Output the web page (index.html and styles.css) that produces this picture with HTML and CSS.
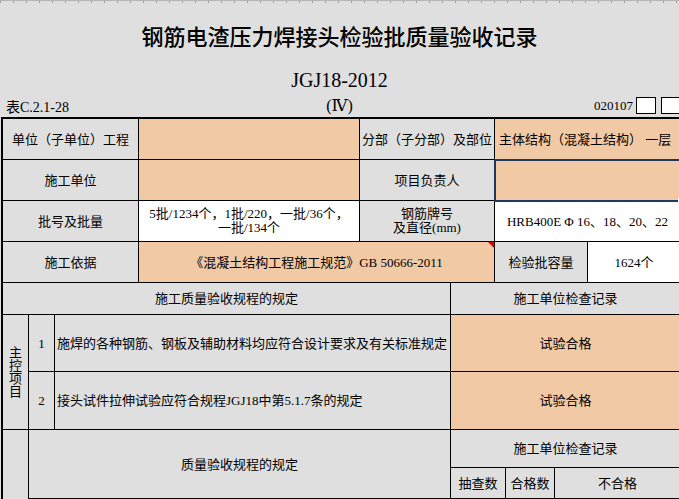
FILE: index.html
```html
<!DOCTYPE html>
<html lang="zh-CN">
<head>
<meta charset="utf-8">
<title>钢筋电渣压力焊接头检验批质量验收记录</title>
<link rel="stylesheet" href="styles.css">
</head>
<body>
<div class="sheet">
  <div class="ruler"></div>
  <header class="head">
    <h1 class="title">钢筋电渣压力焊接头检验批质量验收记录</h1>
    <div class="std">JGJ18-2012</div>
    <div class="meta">
      <span class="form-no">表C.2.1-28</span>
      <span class="roman">(Ⅳ)</span>
      <span class="code">020107<span class="box"></span><span class="box"></span></span>
    </div>
  </header>

  <div class="grid">
    <div class="cell s3">单位（子单位）工程</div>
    <div class="cell fill"></div>
    <div class="cell s2">分部（子分部）及部位</div>
    <div class="cell s4 fill left">主体结构（混凝土结构） 一层</div>

    <div class="cell s3">施工单位</div>
    <div class="cell fill"></div>
    <div class="cell s2">项目负责人</div>
    <div class="cell s4 fill selected"></div>

    <div class="cell s3">批号及批量</div>
    <div class="cell white lines">5批/1234个，1批/220，一批/36个，<br>一批/134个</div>
    <div class="cell s2 lines">钢筋牌号<br>及直径(mm)</div>
    <div class="cell s4 white">HRB400E Φ 16、18、20、22</div>

    <div class="cell s3">施工依据</div>
    <div class="cell s3 fill note">《混凝土结构工程施工规范》GB 50666-2011</div>
    <div class="cell s3">检验批容量</div>
    <div class="cell white">1624个</div>

    <div class="cell s5">施工质量验收规程的规定</div>
    <div class="cell s5">施工单位检查记录</div>

    <div class="cell r2 vert">主控项目</div>
    <div class="cell">1</div>
    <div class="cell s3 left item">施焊的各种钢筋、钢板及辅助材料均应符合设计要求及有关标准规定</div>
    <div class="cell s5 fill">试验合格</div>

    <div class="cell">2</div>
    <div class="cell s3 left item">接头试件拉伸试验应符合规程JGJ18中第5.1.7条的规定</div>
    <div class="cell s5 fill">试验合格</div>

    <div class="cell r3"></div>
    <div class="cell s4 r2">质量验收规程的规定</div>
    <div class="cell s5">施工单位检查记录</div>

    <div class="cell s2">抽查数</div>
    <div class="cell">合格数</div>
    <div class="cell s2">不合格</div>

    <div class="cell"></div>
    <div class="cell s3"></div>
    <div class="cell s2"></div>
    <div class="cell"></div>
    <div class="cell s2"></div>
  </div>
</div>
</body>
</html>
```

FILE: styles.css
```css
html, body {
  margin: 0;
  padding: 0;
}

body {
  width: 679px;
  height: 499px;
  overflow: hidden;
  background: #dfdfdf;
  color: #000;
  font-family: "Liberation Serif", "Noto Sans CJK SC", serif;
}

.sheet {
  width: 679px;
}

.ruler {
  height: 4px;
  border-top: 1px solid #b4b4b4;
  box-sizing: border-box;
  background: repeating-linear-gradient(to right, #9a9a9a 0, #9a9a9a 1px, transparent 1px, transparent 13px);
  background-size: 100% 2px;
  background-repeat: no-repeat;
}

.head {
  height: 113px;
}

.title {
  margin: 0;
  height: 62px;
  line-height: 62px;
  text-align: center;
  font-family: "Noto Sans CJK SC", sans-serif;
  font-weight: 500;
  font-size: 22px;
}

.std {
  height: 28px;
  line-height: 28px;
  text-align: center;
  font-family: "Liberation Serif", serif;
  font-size: 20px;
}

.meta {
  height: 23px;
  display: grid;
  grid-template-columns: 1fr auto 1fr;
  align-items: center;
  padding-left: 6px;
  font-size: 13px;
}

.form-no {
  font-family: "Liberation Serif", "Noto Sans CJK SC", serif;
  font-size: 14px;
}

.roman {
  font-family: "Liberation Serif", "DejaVu Serif", serif;
  font-size: 16px;
  margin-left: -6px;
}

.code {
  display: flex;
  justify-content: flex-end;
  align-items: center;
  margin-right: -2px;
  font-family: "Liberation Serif", serif;
  font-size: 13px;
}

.box {
  width: 20px;
  height: 17px;
  box-sizing: border-box;
  border: 1px solid #000;
  background: #fff;
  margin-left: 3px;
}

.box + .box {
  margin-left: 5px;
}

.grid {
  display: grid;
  grid-template-columns: 26px 26px 84px 221px 91px 44px 11px 49px 33px 93px;
  grid-template-rows: 41px 41px 41px 41px 32px 57px 58px 38px 31px 30px;
  margin-left: 1px;
  border-top: 2px solid #000;
  border-left: 2px solid #000;
  font-size: 13px;
}

.cell {
  box-sizing: border-box;
  border-right: 1px solid #000;
  border-bottom: 1px solid #000;
  background: #dfdfdf;
  display: flex;
  align-items: center;
  justify-content: center;
  text-align: center;
  line-height: 15px;
  white-space: nowrap;
  position: relative;
}

.s2 { grid-column: span 2; }
.s3 { grid-column: span 3; }
.s4 { grid-column: span 4; }
.s5 { grid-column: span 5; }
.r2 { grid-row: span 2; }
.r3 { grid-row: span 3; }

.fill { background: #f1c9a5; }
.white { background: #fff; }

.left {
  justify-content: flex-start;
  text-align: left;
  padding-left: 4px;
}

.item {
  padding-left: 2px;
}

.lines {
  white-space: nowrap;
  line-height: 14px;
  padding: 0 1px;
}

.vert {
  white-space: normal;
  line-height: 13px;
  padding: 0 6px;
  word-break: break-all;
}

.selected {
  outline: 2px solid #1d3a5c;
  outline-offset: -1px;
  z-index: 1;
}

.selected::after {
  content: "";
  position: absolute;
  right: -3px;
  bottom: -3px;
  width: 5px;
  height: 5px;
  background: #1d3a5c;
  border: 1px solid #fff;
  box-sizing: border-box;
}

.note::after {
  content: "";
  position: absolute;
  top: 0;
  right: 0;
  border-top: 6px solid #e00000;
  border-left: 6px solid transparent;
}
```
